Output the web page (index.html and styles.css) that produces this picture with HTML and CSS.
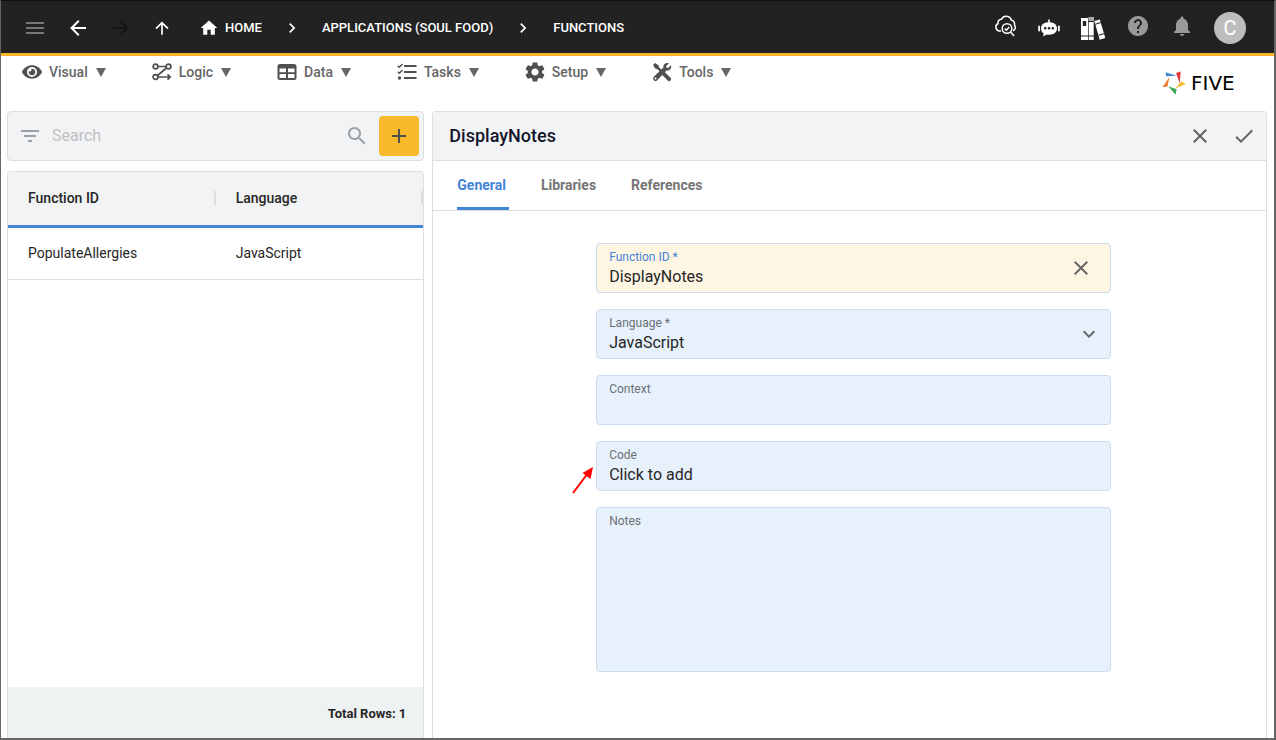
FILE: index.html
```html
<!DOCTYPE html>
<html lang="en">
<head>
    <meta charset="UTF-8">
    <meta name="viewport" content="width=device-width, initial-scale=1.0">
    <title>Five - Functions</title>
    <link rel="stylesheet" href="styles.css">
</head>
<body>
    <header class="topbar">
        <div class="topbar-nav">
            <button type="button" class="icon-btn dim" aria-label="Menu">
                <svg width="24" height="24" viewBox="0 0 24 24"><path d="M3 6h18v2H3zM3 11h18v2H3zM3 16h18v2H3z"/></svg>
            </button>
            <button type="button" class="icon-btn" aria-label="Back">
                <svg width="24" height="24" viewBox="0 0 24 24"><path d="M20 11v2H8l5.500 5.500-1.420 1.420L4.160 12l7.920-7.920L13.500 5.500 8 11z"/></svg>
            </button>
            <button type="button" class="icon-btn off" aria-label="Forward" disabled>
                <svg width="24" height="24" viewBox="0 0 24 24"><path d="M4 11v2h12l-5.500 5.500 1.420 1.420L19.840 12l-7.920-7.920L10.500 5.500 16 11z"/></svg>
            </button>
            <button type="button" class="icon-btn" aria-label="Up">
                <svg width="20" height="20" viewBox="0 0 24 24"><path d="M11 20h2V8l5.500 5.500 1.420-1.420L12 4.160l-7.920 7.920L5.500 13.500 11 8z"/></svg>
            </button>
        </div>
        <nav class="breadcrumbs" aria-label="Breadcrumb">
            <a href="#home">
                <svg width="20" height="20" viewBox="0 0 24 24"><path d="M10 20v-6h4v6h5v-8h3L12 3 2 12h3v8z"/></svg>
                HOME
            </a>
            <svg class="crumb-sep" width="20" height="20" viewBox="0 0 24 24"><path d="M8.590 16.590 13.170 12 8.590 7.410 10 6l6 6-6 6z"/></svg>
            <a href="#applications">APPLICATIONS (SOUL FOOD)</a>
            <svg class="crumb-sep" width="20" height="20" viewBox="0 0 24 24"><path d="M8.590 16.590 13.170 12 8.590 7.410 10 6l6 6-6 6z"/></svg>
            <a href="#functions">FUNCTIONS</a>
        </nav>
        <div class="topbar-tools">
            <button type="button" class="icon-btn raised" aria-label="Cloud check">
                <svg class="line" width="24" height="24" viewBox="0 0 24 24" stroke-width="1.500"><path d="M7 17H5.500A4 4 0 0 1 4 9.500a3.500 3.500 0 0 1 3.500-4.300A5.300 5.300 0 0 1 17.300 6a4 4 0 0 1 3.200 5 3.700 3.700 0 0 1-1.500 5.800"/><circle cx="13" cy="14.500" r="4.800"/><path d="m10.700 14.500 1.700 1.700 2.900-3.200M16.500 18l3.700 4"/></svg>
            </button>
            <button type="button" class="icon-btn" aria-label="Assistant">
                <svg width="22" height="24" viewBox="1 0 22 24"><path fill-rule="evenodd" d="M11.200 3.500h1.600v2.800c4.600.2 7.200 2.700 7.200 6.200 0 3.700-3 6.200-8 6.200-.8 0-1.500 0-2.200-.2L6 20.500l.7-3c-1.800-1.100-2.700-2.900-2.700-5 0-3.500 2.600-6 7.200-6.200zM8.200 11a1.300 1.300 0 1 0 0 2.600 1.300 1.300 0 0 0 0-2.600zm3.800 0a1.300 1.300 0 1 0 0 2.600 1.300 1.300 0 0 0 0-2.600zm3.800 0a1.300 1.300 0 1 0 0 2.600 1.300 1.300 0 0 0 0-2.600z"/><rect x="1.200" y="9.500" width="1.800" height="6" rx=".9"/><rect x="21" y="9.500" width="1.800" height="6" rx=".9"/></svg>
            </button>
            <button type="button" class="icon-btn" aria-label="Library">
                <svg width="26" height="26" viewBox="0 0 26 26"><path fill-rule="evenodd" d="M1 3h7v22H1zm1.800 3v5h3.400V6zM1 20.500v1h7v-1zM8.700 2h5v23h-5zm0 4v1h5V6zm0 14.500v1h5v-1z"/><path fill="#aaa" d="M8.700 2h5v4h-5z"/><path fill-rule="evenodd" d="m14.300 6 5.500-1.600L25.300 23l-5.600 1.700zm.9 2.700.3 1 5.400-1.600-.3-1zm3.400 11 .3 1 5.400-1.600-.3-1z"/></svg>
            </button>
            <button type="button" class="icon-btn grey raised" aria-label="Help">
                <svg width="24" height="24" viewBox="0 0 24 24"><path d="M12 2C6.480 2 2 6.480 2 12s4.480 10 10 10 10-4.480 10-10S17.520 2 12 2zm1 17h-2v-2h2v2zm2.070-7.750l-.9.920C13.450 12.900 13 13.500 13 15h-2v-.5c0-1.100.45-2.100 1.170-2.830l1.240-1.260c.37-.36.59-.86.59-1.410 0-1.100-.9-2-2-2s-2 .9-2 2H8c0-2.210 1.790-4 4-4s4 1.790 4 4c0 .88-.36 1.680-.93 2.250z"/></svg>
            </button>
            <button type="button" class="icon-btn grey raised" aria-label="Notifications">
                <svg width="24" height="24" viewBox="0 0 24 24"><path d="M12 22c1.100 0 2-.9 2-2h-4c0 1.100.89 2 2 2zm6-6v-5c0-3.070-1.640-5.640-4.500-6.320V4c0-.83-.67-1.500-1.500-1.500s-1.500.67-1.500 1.500v.68C7.630 5.360 6 7.920 6 11v5l-2 2v1h16v-1l-2-2z"/></svg>
            </button>
            <button type="button" class="avatar">C</button>
        </div>
    </header>

    <div class="menubar">
        <nav class="menu" aria-label="Main">
            <button type="button">
                <svg width="20" height="18" viewBox="0 0 576 512"><path d="M572.520 241.400C518.290 135.590 410.930 64 288 64S57.680 135.640 3.480 241.410a32.350 32.350 0 0 0 0 29.190C57.710 376.410 165.070 448 288 448s230.320-71.640 284.520-177.410a32.350 32.350 0 0 0 0-29.190zM288 400a144 144 0 1 1 144-144 143.930 143.930 0 0 1-144 144zm0-240a95.310 95.310 0 0 0-25.310 3.790 47.850 47.850 0 0 1-66.900 66.900A95.780 95.780 0 1 0 288 160z"/></svg>
                Visual <span class="caret"></span>
            </button>
            <button type="button">
                <svg class="line" width="20" height="20" viewBox="0 0 20 20" stroke-width="1.700"><circle cx="3.500" cy="4.500" r="2.400"/><circle cx="16.500" cy="4.500" r="2.400"/><circle cx="3.500" cy="15" r="2.400"/><path d="M6 4.500h8M14.500 6 5.500 13.500M6 15h12M15.500 12.300l2.700 2.700-2.700 2.700"/></svg>
                Logic <span class="caret"></span>
            </button>
            <button type="button">
                <svg width="20" height="20" viewBox="0 0 20 20"><path fill-rule="evenodd" d="M3 2h14a2.500 2.500 0 0 1 2.500 2.500v11A2.500 2.500 0 0 1 17 18H3a2.500 2.500 0 0 1-2.500-2.500v-11A2.500 2.500 0 0 1 3 2zm-.5 4.500v3.700H9V6.500zm8.500 0v3.700h6.500V6.500zM2.500 12v4H9v-4zm8.500 0v4h6.500v-4z"/></svg>
                Data <span class="caret"></span>
            </button>
            <button type="button">
                <svg width="20" height="20" viewBox="0 0 20 20"><path d="M7 3h12.500v2H7zM7 9h12.500v2H7zM7 15h12.500v2H7z"/><circle cx="2.500" cy="16" r="1.700"/><path class="line" stroke-width="1.500" d="m.7 3.700 1.700 1.600L5.500 2M.7 9.700l1.700 1.600L5.500 8"/></svg>
                Tasks <span class="caret"></span>
            </button>
            <button type="button">
                <svg width="20" height="20" viewBox="2 2 20 20"><path d="M19.140 12.940c.04-.3.06-.61.06-.94 0-.32-.02-.64-.07-.94l2.030-1.580c.18-.14.23-.41.12-.61l-1.920-3.320c-.12-.22-.37-.29-.59-.22l-2.390.96c-.5-.38-1.030-.7-1.620-.94l-.36-2.540c-.04-.24-.24-.41-.48-.41h-3.840c-.24 0-.43.17-.47.41l-.36 2.540c-.59.24-1.130.57-1.620.94l-2.390-.96c-.22-.08-.47 0-.59.22L2.740 8.870c-.12.21-.08.47.12.61l2.030 1.580c-.05.3-.09.63-.09.94s.02.64.07.94l-2.030 1.580c-.18.14-.23.41-.12.61l1.920 3.320c.12.22.37.29.59.22l2.390-.96c.5.38 1.030.7 1.620.94l.36 2.540c.05.24.24.41.48.41h3.840c.24 0 .44-.17.47-.41l.36-2.540c.59-.24 1.130-.56 1.620-.94l2.390.96c.22.08.47 0 .59-.22l1.920-3.320c.12-.22.07-.47-.12-.61l-2.010-1.580zM12 15.600c-1.980 0-3.600-1.620-3.600-3.600s1.620-3.600 3.600-3.600 3.600 1.620 3.600 3.600-1.620 3.600-3.600 3.600z"/></svg>
                Setup <span class="caret"></span>
            </button>
            <button type="button">
                <svg width="20" height="20" viewBox="0 0 20 20"><path d="M1 3 3 1l3.500 2.200.5 2 2.800 2.900-1.700 1.700-2.900-2.800-2-.5zM11.500 10.300l1.300-.2 5.700 5.700a1.900 1.900 0 0 1-2.700 2.700l-5.600-5.600.2-1.400z"/><path fill-rule="evenodd" d="M17 1.300 14.200 4l.3 1.700 1.700.3L19 3.300c.9 2.900-1.200 5.700-4.500 5.300L5.200 18.200a2.400 2.400 0 0 1-3.400-3.400l9.600-9.300C11 2.400 14 .3 17 1.300zM3.500 15.400a1 1 0 1 0 0 2 1 1 0 0 0 0-2z"/></svg>
                Tools <span class="caret"></span>
            </button>
        </nav>
        <a href="#five" class="brand">
            <svg width="24" height="24" viewBox="0 0 24 24"><path fill="#4285d8" d="M3.700 1.200l10.800 3.600L4 5.200z"/><path fill="#e2383f" d="M14 2l4.700-1.500L17.700 12z"/><path fill="#f8b92b" d="M19.300 10.500l4.500 2.500-10.500 4.200z"/><path fill="#3fab54" d="M6.300 15.300l8.400 3-1.200 5.500z"/><path fill="#f47b30" d="M7.500 6l-2 9.500-5.200.7z"/></svg>
            <span>FIVE</span>
        </a>
    </div>

    <main class="content">
        <section class="list">
            <div class="search-bar">
                <button type="button" class="icon-btn filter" aria-label="Filter">
                    <svg width="24" height="24" viewBox="0 0 24 24"><path d="M10 18h4v-2h-4v2zM3 6v2h18V6H3zm3 7h12v-2H6v2z"/></svg>
                </button>
                <input type="text" placeholder="Search" aria-label="Search">
                <button type="button" class="icon-btn filter" aria-label="Search">
                    <svg width="24" height="24" viewBox="0 0 24 24"><path d="M15.500 14h-.79l-.28-.27C15.410 12.590 16 11.110 16 9.500 16 5.910 13.090 3 9.500 3S3 5.910 3 9.500 5.910 16 9.500 16c1.610 0 3.090-.59 4.230-1.570l.27.28v.79l5 4.990L20.490 19l-4.990-5zm-6 0C7.010 14 5 11.990 5 9.500S7.010 5 9.500 5 14 7.010 14 9.500 11.990 14 9.500 14z"/></svg>
                </button>
                <button type="button" class="add-btn" aria-label="Add">
                    <svg width="24" height="24" viewBox="0 0 24 24"><path d="M19 13h-6v6h-2v-6H5v-2h6V5h2v6h6z"/></svg>
                </button>
            </div>
            <div class="table-box">
                <table>
                    <thead>
                        <tr>
                            <th><div>Function ID</div></th>
                            <th><div>Language</div></th>
                        </tr>
                    </thead>
                    <tbody>
                        <tr>
                            <td>PopulateAllergies</td>
                            <td>JavaScript</td>
                        </tr>
                    </tbody>
                </table>
                <div class="table-footer">Total Rows: 1</div>
            </div>
        </section>

        <section class="detail">
            <div class="detail-header">
                <h1>DisplayNotes</h1>
                <button type="button" class="icon-btn action" aria-label="Cancel">
                    <svg width="24" height="24" viewBox="0 0 24 24"><path d="M19 6.410 17.590 5 12 10.590 6.410 5 5 6.410 10.590 12 5 17.590 6.410 19 12 13.410 17.590 19 19 17.590 13.410 12z"/></svg>
                </button>
                <button type="button" class="icon-btn action" aria-label="Save">
                    <svg width="24" height="24" viewBox="0 0 24 24"><path d="M9 16.200 4.800 12l-1.400 1.400L9 19 21 7l-1.400-1.400z"/></svg>
                </button>
            </div>
            <div class="tabs" role="tablist">
                <button type="button" role="tab" class="active" aria-selected="true">General</button>
                <button type="button" role="tab">Libraries</button>
                <button type="button" role="tab">References</button>
            </div>
            <form class="detail-form">
                <div class="field focused">
                    <div class="field-main">
                        <label for="functionId">Function ID *</label>
                        <input type="text" id="functionId" value="DisplayNotes">
                    </div>
                    <button type="button" class="icon-btn action clear" aria-label="Clear">
                        <svg width="24" height="24" viewBox="0 0 24 24"><path d="M19 6.410 17.590 5 12 10.590 6.410 5 5 6.410 10.590 12 5 17.590 6.410 19 12 13.410 17.590 19 19 17.590 13.410 12z"/></svg>
                    </button>
                </div>
                <div class="field">
                    <div class="field-main">
                        <label for="language">Language *</label>
                        <select id="language">
                            <option>JavaScript</option>
                        </select>
                    </div>
                    <svg class="chevron" width="20" height="20" viewBox="2 2 20 20"><path d="M7.410 8.590 12 13.170l4.590-4.580L18 10l-6 6-6-6z"/></svg>
                </div>
                <div class="field">
                    <div class="field-main">
                        <label for="context">Context</label>
                        <input type="text" id="context">
                    </div>
                </div>
                <div class="field">
                    <div class="field-main">
                        <label for="code">Code</label>
                        <input type="text" id="code" value="Click to add" readonly>
                    </div>
                    <svg class="pointer" width="22" height="28" viewBox="0 0 22 28"><path d="M1 27 16 7" fill="none" stroke="#f00" stroke-width="2"/><path d="M21 1 18.500 13 10.500 7z" fill="#f00"/></svg>
                </div>
                <div class="field notes">
                    <div class="field-main">
                        <label for="notes">Notes</label>
                        <textarea id="notes"></textarea>
                    </div>
                </div>
            </form>
        </section>
    </main>
</body>
</html>
```
FILE: styles.css
```css
* {
    box-sizing: border-box;
}

body {
    margin: 0;
    min-height: 100vh;
    display: flex;
    flex-direction: column;
    font-family: Roboto, "Liberation Sans", sans-serif;
    font-size: 14px;
    color: #262626;
    background: white;
    border: 1px solid #666;
    border-top-color: #111;
    border-right-width: 2px;
    border-bottom-width: 2px;
}

button,
input,
select,
textarea {
    font-family: inherit;
    color: inherit;
    background: none;
    border: none;
    padding: 0;
    margin: 0;
    outline: none;
}

button {
    cursor: pointer;
}

a {
    color: inherit;
    text-decoration: none;
}

svg {
    display: block;
    flex: none;
    fill: currentColor;
}

.line {
    fill: none;
    stroke: currentColor;
}

.icon-btn {
    display: flex;
    align-items: center;
    justify-content: center;
}

/* Top bar */
.topbar {
    display: flex;
    align-items: center;
    height: 55px;
    padding: 2px 28px 0 22px;
    background: #222;
    color: white;
    border-bottom: 3px solid #f8b42b;
}

.topbar-nav {
    display: flex;
    align-items: center;
    gap: 19px;
}

.dim {
    color: #777;
}

.off {
    color: #151515;
}

.grey {
    color: #999;
}

.raised {
    padding-bottom: 4px;
}

.breadcrumbs {
    display: flex;
    align-items: center;
    gap: 20px;
    margin-left: 27px;
    font-size: 13px;
    font-weight: 500;
    line-height: 20px;
}

.breadcrumbs a {
    display: flex;
    align-items: center;
    gap: 6px;
}

.topbar-tools {
    display: flex;
    align-items: center;
    gap: 20px;
    margin-left: auto;
}

.avatar {
    width: 32px;
    height: 32px;
    border-radius: 50%;
    background: #bdbdbd;
    color: white;
    font-size: 20px;
}

/* Menu bar */
.menubar {
    display: flex;
    justify-content: space-between;
    height: 55px;
    padding: 5px 24px 0 21px;
}

.menu {
    display: flex;
    align-items: flex-start;
    gap: 46px;
}

.menu button {
    display: flex;
    align-items: center;
    gap: 7px;
    height: 22px;
    font-size: 14px;
    font-weight: 500;
    color: #666;
}

.menu svg {
    color: #505050;
}

.caret {
    margin-left: 1px;
    border: 5px solid transparent;
    border-top: 9px solid #666;
    border-bottom: none;
}

.brand {
    display: flex;
    align-items: center;
    gap: 5px;
    height: 44px;
    color: black;
    font-family: "DejaVu Sans", sans-serif;
    font-size: 20px;
}

.brand span {
    min-width: 59px;
}

/* Content */
.content {
    flex: 1;
    display: grid;
    grid-template-columns: 1fr 2fr;
    gap: 8px;
    padding: 0 7px 0 6px;
}

.list {
    display: flex;
    flex-direction: column;
    gap: 10px;
}

.search-bar {
    display: flex;
    align-items: center;
    gap: 10px;
    height: 50px;
    padding: 0 4px 0 10px;
    background: #f1f3f4;
    border: 1px solid #dedede;
    border-radius: 4px;
}

.search-bar input {
    flex: 1;
    min-width: 0;
    padding-bottom: 2px;
    font-size: 16px;
}

.search-bar input::placeholder {
    color: #bfc1c3;
}

.filter {
    color: #9aa0a6;
}

.add-btn {
    display: flex;
    align-items: center;
    justify-content: center;
    width: 40px;
    height: 40px;
    border-radius: 4px;
    background: #f8b92b;
    color: #505050;
}

.table-box {
    flex: 1;
    display: flex;
    flex-direction: column;
    border: 1px solid #dedede;
    border-bottom: none;
    border-radius: 4px 4px 0 0;
}

table {
    width: 100%;
    table-layout: fixed;
    border-collapse: separate;
    border-spacing: 0;
}

th {
    height: 56px;
    padding: 0 0 2px 20px;
    text-align: left;
    font-weight: 500;
    background: #f1f3f4;
    border-bottom: 3px solid #4285d8;
}

th div {
    line-height: 14px;
    border-right: 2px solid #dedede;
}

td {
    height: 52px;
    padding: 0 0 2px 20px;
    border-bottom: 1px solid #dedede;
}

.table-footer {
    margin-top: auto;
    height: 51px;
    padding-right: 17px;
    line-height: 54px;
    text-align: right;
    font-size: 13px;
    font-weight: 700;
    background: #eef2f3;
}

.detail {
    border: 1px solid #dedede;
    border-bottom: none;
    border-radius: 4px 4px 0 0;
}

.detail-header {
    display: flex;
    align-items: center;
    gap: 20px;
    height: 49px;
    padding: 0 10px 0 16px;
    background: #f1f3f4;
    border-bottom: 1px solid #dedede;
}

.detail-header h1 {
    flex: 1;
    margin: 0;
    padding-bottom: 2px;
    font-size: 18px;
    font-weight: 500;
    color: #14142b;
}

.action {
    color: #666;
}

.tabs {
    display: flex;
    gap: 32px;
    height: 50px;
    padding: 0 24px;
    border-bottom: 1px solid #dedede;
}

.tabs button {
    padding-right: 3px;
    font-size: 14px;
    font-weight: 700;
    color: #757575;
    border-top: 1px solid transparent;
    border-bottom: 3px solid transparent;
}

.tabs .active {
    color: #4285d8;
    border-bottom-color: #4285d8;
}

.detail-form {
    display: flex;
    flex-direction: column;
    align-items: center;
    gap: 16px;
    padding: 32px 12px 32px 20px;
}

.field {
    position: relative;
    display: flex;
    align-items: center;
    width: 100%;
    max-width: 515px;
    height: 50px;
    background: #e7f1fc;
    border: 1px solid #cbdcec;
    border-radius: 4px;
}

.field-main {
    flex: 1;
    align-self: stretch;
    display: flex;
    flex-direction: column;
    padding: 6px 12px 4px;
}

.field label {
    font-size: 12px;
    line-height: 14px;
    color: #6b7075;
}

.field input,
.field select {
    height: 24px;
    font-size: 16px;
    appearance: none;
}

.focused {
    background: #fff5e3;
}

.focused label {
    color: #4285d8;
}

.clear {
    margin-right: 17px;
}

.chevron {
    position: absolute;
    right: 11px;
    top: 14px;
    color: #666;
    pointer-events: none;
}

/* Red arrow next to the Code field */
.pointer {
    position: absolute;
    right: 100%;
    top: 24px;
    margin-right: 3px;
}

.notes {
    height: 165px;
}

.notes textarea {
    flex: 1;
    font-size: 16px;
    resize: none;
}
```
